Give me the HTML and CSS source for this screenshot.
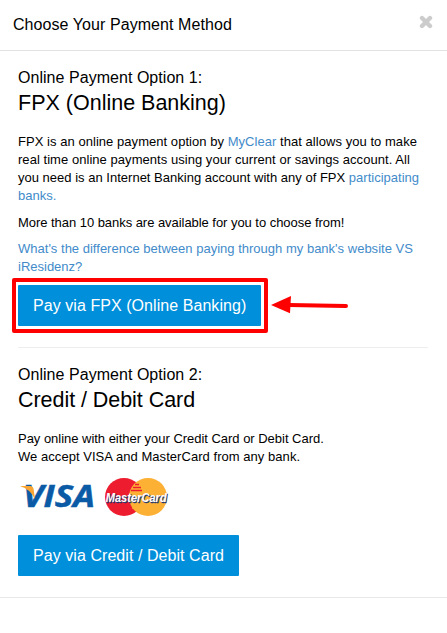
FILE: index.html
```
<!DOCTYPE html>
<html>
	<head>
		<meta charset="utf-8">
		<title>Choose Your Payment Method</title>
		<link rel="stylesheet" href="styles.css">
	</head>
	<body>
		<div class="modal">
			<div class="modal-header">
				<h1 class="title">Choose Your Payment Method</h1>
				<a href="#" class="close" aria-label="Close">
					<svg width="14" height="14" viewBox="0 0 14 14">
						<path d="M3 3L11 11M11 3L3 11"/>
					</svg>
				</a>
			</div>

			<div class="modal-body">
				<div class="option">
					<h2>Online Payment Option 1:</h2>
					<h3>FPX (Online Banking)</h3>
					<p class="intro">
						<span class="wide">FPX is an online payment option by <a href="#">MyClear</a> that allows you to make</span><br>
						<span class="wide">real time online payments using your current or savings account. All</span><br>
						<span class="question">you need is an Internet Banking account with any of FPX <a href="#">participating</a></span><br>
						<a href="#">banks.</a>
					</p>
					<p><span class="narrow">More than 10 banks are available for you to choose from!</span></p>
					<p>
						<a href="#" class="question">What's the difference between paying through my bank's website VS</a><br>
						<a href="#">iResidenz?</a>
					</p>
					<div class="action">
						<a href="#" class="button fpx">Pay via FPX (Online Banking)</a>
						<span class="highlight"></span>
						<svg class="arrow" width="80" height="20" viewBox="0 0 80 20">
							<path class="shaft" d="M18 9.9L75 11"/>
							<path class="head" d="M0 10L20 1L19 18.200Z"/>
						</svg>
					</div>
				</div>

				<div class="option">
					<h2>Online Payment Option 2:</h2>
					<h3 class="card-title">Credit / Debit Card</h3>
					<p>
						<span class="narrow-card">Pay online with either your Credit Card or Debit Card.</span><br>
						<span class="wide">We accept VISA and MasterCard from any bank.</span>
					</p>
					<div class="cards">
						<svg width="78" height="40" viewBox="0 0 78 40">
							<text class="visa" x="5" y="30" textLength="72" lengthAdjust="spacingAndGlyphs">VISA</text>
							<path class="visa-wing" d="M2 9H12Q15 9 15.600 12L17 22Q12 12 2 9Z"/>
						</svg>
						<svg width="64" height="40" viewBox="0 0 64 40">
							<circle cx="20" cy="20" r="19" fill="#ed1c2e"/>
							<circle cx="44" cy="20" r="19" fill="#fcb034"/>
							<path class="bars-red" d="M31 7.500H35M29 10.500H37M27 13.500H38"/>
							<path class="bars-yellow" d="M27 28H37M28 31H36"/>
							<text class="mc mc-shadow" x="2.500" y="25.700" textLength="61" lengthAdjust="spacingAndGlyphs">MasterCard</text>
							<text class="mc" x="1.700" y="24.900" textLength="61" lengthAdjust="spacingAndGlyphs">MasterCard</text>
						</svg>
					</div>
					<div class="action">
						<a href="#" class="button card">Pay via Credit / Debit Card</a>
					</div>
				</div>
			</div>
		</div>
	</body>
</html>
```
FILE: styles.css
```
body {
	margin: 0;
	background: #fff;
	color: #000;
	font-family: "Liberation Sans", Arial, sans-serif;
	font-size: 13px;
	line-height: 18px;
}
h1, h2, h3, p {
	margin: 0;
	font-weight: normal;
	white-space: nowrap;
}
a {
	color: #428bca;
	text-decoration: none;
}
.modal {
	border-bottom: 1px solid #e8e8e8;
}
.modal-header {
	display: flex;
	justify-content: space-between;
	height: 50px;
	padding: 0 14px 0 13px;
	border-bottom: 1px solid #e2e2e2;
}
.title {
	font-size: 16px;
	line-height: 50px;
	letter-spacing: 0.07px;
}
.close {
	margin-top: 15px;
	height: 14px;
}
.close svg {
	display: block;
	fill: none;
	stroke: #ccc;
	stroke-width: 4.4;
	stroke-linecap: round;
}
.modal-body {
	padding: 16px 19px 21px 18px;
}
h2 {
	font-size: 16px;
	line-height: 22px;
	letter-spacing: 0.04px;
}
h3 {
	font-size: 21.5px;
	line-height: 28px;
	margin-bottom: 16px;
}
.card-title {
	letter-spacing: -0.05px;
}
p {
	margin-bottom: 8px;
}
.intro {
	margin-bottom: 9px;
}
.wide {
	letter-spacing: 0.045px;
}
.narrow {
	letter-spacing: -0.045px;
}
.narrow-card {
	letter-spacing: -0.025px;
}
.question {
	letter-spacing: 0.01px;
}
.option + .option {
	margin-top: 21px;
	padding-top: 16px;
	border-top: 1px solid #eee;
}
.action {
	position: relative;
	display: flex;
	margin-top: 9px;
}
.button {
	height: 41px;
	box-sizing: border-box;
	padding: 0 15px;
	border-radius: 1px;
	background: #008fdb;
	color: #fff;
	font-size: 16px;
	line-height: 41px;
	letter-spacing: 0.06px;
	white-space: nowrap;
}
.fpx {
	width: 243px;
}
.card {
	width: 221px;
}

/* marker around the FPX button */
.highlight {
	position: absolute;
	left: -6px;
	top: -7px;
	width: 248px;
	height: 47px;
	border: 4px solid #f00;
	border-radius: 2px;
}
.arrow {
	position: absolute;
	left: 253px;
	top: 10px;
}
.shaft {
	stroke: #f00;
	stroke-width: 4;
	stroke-linecap: round;
}
.head {
	fill: #f00;
}

.cards {
	display: flex;
	gap: 8px;
	margin-top: 11px;
	margin-bottom: 18px;
}
.cards svg {
	overflow: visible;
}
.visa {
	font: italic bold 29.5px "Open Sans", sans-serif;
	fill: #0a5aa6;
	stroke: #0a5aa6;
	stroke-width: 0.5;
}
.visa-wing {
	fill: #f9a533;
}
.bars-red {
	stroke: #ed1c2e;
	stroke-width: 1.3;
}
.bars-yellow {
	stroke: #fcb034;
	stroke-width: 1.3;
}
.mc {
	font: italic bold 13px "Liberation Sans", sans-serif;
	fill: #fff;
}
.mc-shadow {
	fill: #253a70;
	stroke: #253a70;
	stroke-width: 0.4;
}
```
